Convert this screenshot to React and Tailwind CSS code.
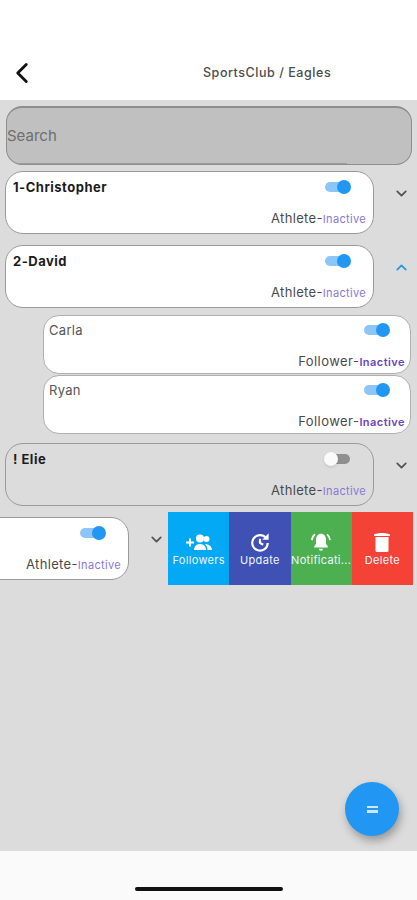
import React from 'react';
import { ChevronDown, ChevronUp, ChevronLeft } from 'lucide-react';

const Toggle = ({ on = true }) => (
    <div className="relative h-[10px] w-[26px]">
        <div className={`h-[10px] w-[24px] rounded-full ${on ? 'bg-[#8cc6f8]' : 'ml-[2px] bg-[#8f8f8f]'}`} />
        <div className={`absolute top-[-2px] h-[14px] w-[14px] rounded-full ${on ? 'right-0 bg-[#2196f3]' : 'left-0 bg-[#fafafa] shadow-sm'}`} />
    </div>
);

const Role = ({ role, strong }) => (
    <div className={`flex items-baseline justify-end ${strong ? 'tracking-[0.45px]' : 'tracking-[0.33px]'}`}>
        <span className="text-[13px] leading-[16px] text-[#4a4a4a]">{role}-</span>
        <span className={strong ? 'text-[11px] leading-[16px] font-semibold text-[#6a45c0]' : 'text-[11px] leading-[16px] text-[#8a78d8]'}>Inactive</span>
    </div>
);

const Card = ({ name, role = 'Athlete', on = true, dim = false }) => (
    <div className={`flex h-[63px] w-[369px] shrink-0 flex-col rounded-[18px] border border-[#9a9a9a] pt-[7px] pr-[7px] pb-[6px] pl-[7px] ${dim ? 'bg-[#dcdcdc]' : 'bg-white'}`}>
        <div className="flex items-start justify-between pr-[15px]">
            <span className="text-[13px] leading-[16px] font-bold tracking-[0.5px] text-[#1c1c1c]">{name}</span>
            <div className={on ? 'mt-[3px]' : 'mt-[3px] mr-[1px]'}><Toggle on={on} /></div>
        </div>
        <div className="mt-auto"><Role role={role} /></div>
    </div>
);

const SubCard = ({ name }) => (
    <div className="flex h-[59px] w-[368px] flex-col rounded-[16px] border border-[#b0b0b0] bg-white pt-[6px] pr-[5px] pb-[3px] pl-[5px]">
        <div className="flex items-start justify-between pr-[15px]">
            <span className="text-[13px] leading-[16px] tracking-[0.3px] text-[#555555]">{name}</span>
            <div className="mt-[3px]"><Toggle /></div>
        </div>
        <div className="mt-auto"><Role role="Follower" strong /></div>
    </div>
);

const Action = ({ color, label, children }) => (
    <div className={`flex h-[73px] w-[61.25px] flex-col items-center pt-[20px] ${color}`}>
        <div className="flex h-[20px] items-center justify-center">{children}</div>
        <span className="mt-[1px] text-center text-[11px] leading-[14px] tracking-[0.3px] whitespace-nowrap text-[#eef6ff]">{label}</span>
    </div>
);

const Expander = ({ open = false }) => (
    <div className="mt-[14px] ml-[19px] self-start">
        {open
            ? <ChevronUp className="h-[17px] w-[17px] text-[#2196f3]" strokeWidth={2.5} />
            : <ChevronDown className="h-[17px] w-[17px] text-[#555555]" strokeWidth={2.5} />}
    </div>
);

const App = () => {
    return (
        <div className="flex h-[900px] w-[417px] flex-col overflow-hidden bg-[#fafafa] font-['Inter',sans-serif]">
            <header className="flex h-[100px] shrink-0 items-start bg-white">
                <ChevronLeft className="mt-[56px] ml-[5px] h-[34px] w-[34px] text-[#111111]" strokeWidth={2} />
                <h1 className="mt-[65px] ml-[164px] text-[12.5px] leading-[16px] font-medium tracking-[0.55px] text-[#4c4c4c]">SportsClub / Eagles</h1>
            </header>

            <main className="relative flex h-[751px] shrink-0 flex-col overflow-hidden bg-[#dcdcdc] pt-[6px]">
                <div className="relative ml-[6px] flex h-[59px] w-[406px] items-center rounded-[16px] border border-t-2 border-[#8e8e8e] bg-[#c0c0c0] text-[15px] text-[#6e6e6e]">
                    Search
                    <div className="absolute bottom-0 left-[10px] h-[1px] w-[330px] bg-[#9c9c9c]" />
                </div>

                <div className="mt-[6px] ml-[5px] flex">
                    <Card name="1-Christopher" />
                    <Expander />
                </div>

                <div className="mt-[11px] ml-[5px] flex">
                    <Card name="2-David" />
                    <Expander open />
                </div>

                <div className="mt-[7px] ml-[43px] flex flex-col gap-[1px]">
                    <SubCard name="Carla" />
                    <SubCard name="Ryan" />
                </div>

                <div className="mt-[9px] ml-[5px] flex">
                    <Card name="! Elie" on={false} dim />
                    <Expander />
                </div>

                <div className="mt-[6px] flex items-start">
                    <div className="mt-[5px] ml-[-240px]"><Card name="" /></div>
                    <div className="mt-[5px]"><Expander /></div>
                    <div className="ml-[3px] flex">
                        <Action color="bg-[#03a9f4]" label="Followers">
                            <svg width="26" height="17" viewBox="0 0 26 17" fill="white">
                                <path d="M0 7.500h3v-3h2v3h3v2H5v3H3v-3H0z" />
                                <circle cx="14" cy="4.500" r="4" />
                                <circle cx="20.500" cy="5" r="3" />
                                <path d="M8 16c0-4 3-6 6-6s6 2 6 6z" />
                                <path d="M19 10c3 0 7 2 7 6h-4.500c0-2.500-1-4.500-2.500-6z" />
                            </svg>
                        </Action>
                        <Action color="bg-[#3f51b5]" label="Update">
                            <svg width="20" height="20" viewBox="0 0 22 22" fill="none" stroke="white">
                                <path d="M17.500 6.500A8.500 8.500 0 1 0 19.500 12" strokeWidth="2.400" />
                                <path d="M20.500 1.500v7h-7z" fill="white" stroke="none" />
                                <path d="M11 7.500V12l3.500 2" strokeWidth="2.400" />
                            </svg>
                        </Action>
                        <Action color="bg-[#4caf50]" label="Notificati...">
                            <svg width="20" height="20" viewBox="0 0 22 22" fill="white">
                                <path d="M11 2c-3.500 0-5.500 3-5.500 6.500V13L3.500 16v1h15v-1l-2-3V8.500C16.500 5 14.500 2 11 2z" />
                                <path d="M8.800 18.500a2.200 2.200 0 0 0 4.400 0z" />
                                <path d="M4.500 2.500C2.500 4 1.200 6.300 1 9M17.500 2.500c2 1.500 3.300 3.800 3.500 6.500" fill="none" stroke="white" strokeWidth="1.800" />
                            </svg>
                        </Action>
                        <Action color="bg-[#f44336]" label="Delete">
                            <svg width="16" height="19" viewBox="0 0 16 19" fill="white">
                                <path d="M0 1.500C2 .5 5 0 8 0s6 .5 8 1.500V3H0z" />
                                <path d="M1.500 4h13v13.500A1.500 1.500 0 0 1 13 19H3a1.500 1.500 0 0 1-1.500-1.500z" />
                            </svg>
                        </Action>
                    </div>
                </div>

                <button className="absolute top-[682px] left-[345px] flex h-[54px] w-[54px] items-center justify-center rounded-full bg-[#2196f3] shadow-[2px_5px_8px_rgba(0,0,0,0.3)]">
                    <span className="flex flex-col gap-[2px]">
                        <span className="block h-[2.500px] w-[11px] bg-[#cfe6fb]" />
                        <span className="block h-[2.500px] w-[11px] bg-[#cfe6fb]" />
                    </span>
                </button>
            </main>

            <footer className="flex flex-1 items-end justify-center pb-[9px]">
                <div className="h-[4px] w-[148px] rounded-full bg-[#111111]" />
            </footer>
        </div>
    );
};

export default App;
